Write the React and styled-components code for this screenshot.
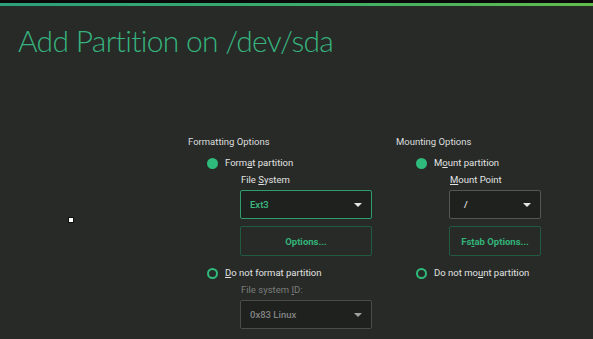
import React from "react";
import styled, { createGlobalStyle } from "styled-components";

const GlobalStyle = createGlobalStyle`
    html, body {
        margin: 0;
        padding: 0;
        background-color: #272a27;
    }
    body {
        font-family: Roboto, "Liberation Sans", sans-serif;
    }
`

const Page = styled.div`
    position: relative;
    width: 593px;
    height: 339px;
    overflow: hidden;
    background-color: #272a27;
`
const TopBar = styled.div`
    height: 3px;
    background-color: #0a0a0a;
    border-bottom: 3px solid transparent;
    border-image: linear-gradient(90deg, #2ba17c 0%, #3aac6c 50%, #62bd4c 100%) 1;
`
const Title = styled.h1`
    margin: 0;
    padding: 15px 0 0 18px;
    font-family: Lato, "Open Sans", sans-serif;
    font-weight: 300;
    font-size: 30px;
    line-height: 38px;
    color: #36b37e;
    letter-spacing: -0.7px;
`
const Columns = styled.div`
    display: grid;
    grid-template-columns: 208px 150px;
    padding: 76px 0 0 188px;
`
const Column = styled.div`
    display: flex;
    flex-direction: column;
`
const SectionLabel = styled.div`
    font-size: 9.5px;
    line-height: 14px;
    color: #dedede;
`
const RadioRow = styled.div`
    display: flex;
    align-items: center;
    gap: 8px;
    margin-left: ${props => props.indent || 19}px;
    margin-top: ${props => props.top || 0}px;
    font-size: 9.5px;
    line-height: 14px;
    color: #e2e2e2;
`
const Radio = styled.span`
    box-sizing: border-box;
    width: 11px;
    height: 11px;
    margin-right: -1px;
    border-radius: 50%;
    background-color: ${props => props.checked ? "#2fbb7c" : "transparent"};
    border: 2px solid #2fbb7c;
`
const Sub = styled.div`
    display: flex;
    flex-direction: column;
    margin-left: ${props => props.indent || 52}px;
    width: ${props => props.width || 132}px;
`
const FieldLabel = styled.div`
    font-size: 9.5px;
    line-height: 14px;
    margin: 3px 0 3px 1px;
    color: ${props => props.dim ? "#7c7e7c" : "#e2e2e2"};
`
const U = styled.span`
    text-decoration: underline;
    text-underline-offset: 1px;
`
const Combo = styled.div`
    box-sizing: border-box;
    height: 29px;
    display: flex;
    align-items: center;
    justify-content: space-between;
    padding: 0 9px 0 ${props => props.pad || 9}px;
    background-color: #1f211f;
    border: 1px solid ${props => props.active ? "#2f9e6c" : props.dim ? "#4a4c4a" : "#555755"};
    border-radius: 2px;
    font-size: 9.5px;
    font-weight: 500;
    color: ${props => props.active ? "#3cbb80" : props.dim ? "#838583" : "#e6e6e6"};
`
const Arrow = styled.span`
    width: 0;
    height: 0;
    border-left: 4px solid transparent;
    border-right: 4px solid transparent;
    border-top: 4px solid ${props => props.dim ? "#a0a2a0" : "#e6e6e6"};
`
const Button = styled.div`
    box-sizing: border-box;
    height: 30px;
    margin-top: 7px;
    display: flex;
    align-items: center;
    justify-content: center;
    border: 1px solid #225a40;
    border-radius: 2px;
    font-size: 9.5px;
    font-weight: 700;
    color: #34b47a;
`
const Cursor = styled.span`
    position: absolute;
    left: 68px;
    top: 217px;
    width: 4px;
    height: 4px;
    background-color: #ffffff;
    border: 1px solid #111;
`

const App = () => {
    return (
        <Page>
            <GlobalStyle />
            <TopBar />
            <Title>Add Partition on /dev/sda</Title>
            <Columns>
                <Column>
                    <SectionLabel>Formatting Options</SectionLabel>
                    <RadioRow top={7}>
                        <Radio checked />
                        <span>Form<U>a</U>t partition</span>
                    </RadioRow>
                    <Sub>
                        <FieldLabel>File <U>S</U>ystem</FieldLabel>
                        <Combo active>
                            <span>Ext3</span>
                            <Arrow />
                        </Combo>
                        <Button>Options...</Button>
                    </Sub>
                    <RadioRow top={10}>
                        <Radio />
                        <span><U>D</U>o not format partition</span>
                    </RadioRow>
                    <Sub>
                        <FieldLabel dim>File system <U>I</U>D:</FieldLabel>
                        <Combo dim>
                            <span>0x83 Linux</span>
                            <Arrow dim />
                        </Combo>
                    </Sub>
                </Column>
                <Column>
                    <SectionLabel>Mounting Options</SectionLabel>
                    <RadioRow top={7} indent={20}>
                        <Radio checked />
                        <span>M<U>o</U>unt partition</span>
                    </RadioRow>
                    <Sub indent={53} width={92}>
                        <FieldLabel><U>M</U>ount Point</FieldLabel>
                        <Combo pad={14}>
                            <span>/</span>
                            <Arrow />
                        </Combo>
                        <Button>Fs<U>t</U>ab Options...</Button>
                    </Sub>
                    <RadioRow top={10} indent={20}>
                        <Radio />
                        <span>Do not mo<U>u</U>nt partition</span>
                    </RadioRow>
                </Column>
            </Columns>
            <Cursor />
        </Page>
    )
}

export default App
